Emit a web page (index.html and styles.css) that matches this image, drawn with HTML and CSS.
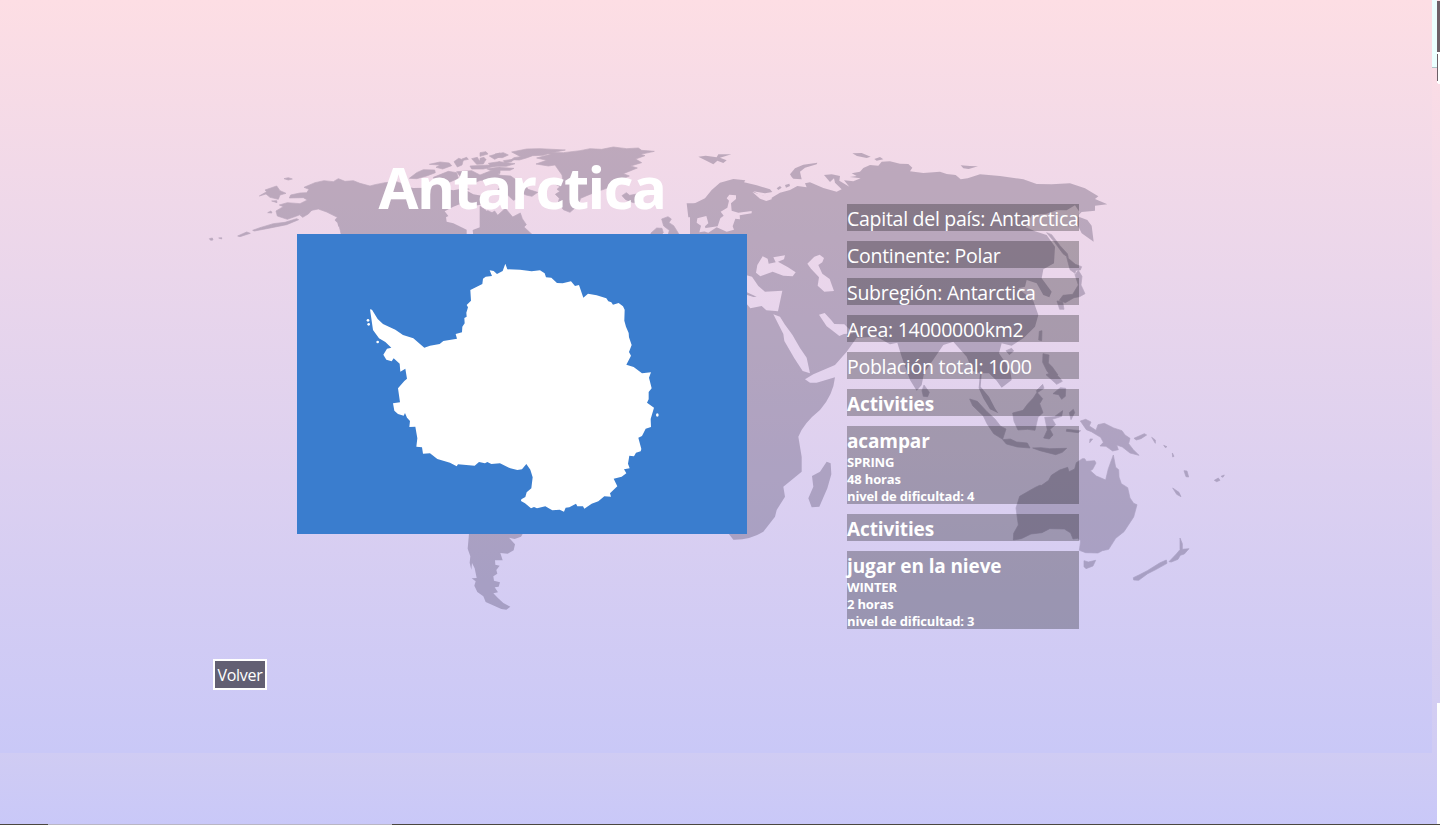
FILE: index.html
```html
<!DOCTYPE html>
<html lang="es">
<head>
<meta charset="utf-8">
<title>Antarctica</title>
<link rel="stylesheet" href="styles.css">
</head>
<body>
<div class="page">
  <div class="backdrop"></div>
  <svg class="map" viewBox="0 0 1440 825" aria-hidden="true">
    <defs>
      <filter id="soft"><feGaussianBlur stdDeviation="0.75"/></filter>
      <mask id="world" maskUnits="userSpaceOnUse" x="0" y="0" width="1440" height="825">
        <g filter="url(#soft)">
          <!-- Alaska and Canada -->
          <g fill="#fff" stroke="#fff" stroke-width="2" stroke-linejoin="round" transform="translate(200 140) scale(.33333)">
            <path d="M228 213L250 200L238 195L262 188L300 191L322 180L310 173L268 174L272 165L300 159L320 158L327 148L312 142L345 128L372 122L400 125L415 116L435 124L460 122L480 130L510 138L525 134L555 128L590 125L630 140L680 145L720 130L760 150L800 145L840 160L870 190L860 210L900 230V290H425L418 260L405 255L405 240L412 232L380 216L355 207L330 212L290 228L262 238L232 228Z"/>
            <path d="M178 168L200 155L195 150L230 138L240 152L258 160L240 165L235 178L210 172L198 162ZM252 116L265 113L277 117L265 120ZM215 183L230 182L231 188ZM203 218L213 213L216 219ZM113 288L140 276L151 280L120 290ZM158 271L180 263L220 251L255 247L290 236L296 239L260 254L200 266L163 273ZM300 225L323 212L336 210L325 222L308 232ZM28 296L37 294L39 300L32 301ZM56 294L65 293L65 297Z"/>
            <path d="M628 115L650 98L670 89L704 90L706 98L680 108L650 116ZM688 73L720 66L748 69L755 77L728 87L708 82L720 75ZM762 65L776 55L790 60L786 75L772 81ZM786 57L800 52L805 58L790 61ZM815 56L832 52L838 62L858 58L850 72L830 73ZM868 48L900 39V50L884 58ZM700 112L745 94L770 98L775 115L745 128L705 125ZM770 95L815 92L840 105L900 82V100L855 115L820 130L790 122ZM810 78L870 75L900 65V75L850 87L815 87Z"/>
            <path fill="#000" stroke="none" d="M734 214L760 200L790 188L820 198L868 190L870 205L855 217L858 240L840 262L818 270L820 288L800 288L800 269L760 250L740 245L738 232L745 228Z"/>
            <path fill="#000" stroke="none" d="M397 234L412 248L421 283L416 285L403 258L400 245ZM620 140L660 126L690 131L670 143L640 144ZM725 145L770 130L795 143L760 151ZM798 151L845 138L865 155L850 168L820 163Z"/>
          </g>
          <!-- Arctic islands, Greenland, Labrador, Iceland, Britain -->
          <g fill="#fff" stroke="#fff" stroke-width="2" stroke-linejoin="round" transform="translate(480 140) scale(.33333)">
            <path d="M168 72L200 61L170 54L212 43L192 37L250 38L300 32L330 26L365 28L400 21L440 26L475 24L485 31L523 34L482 43L495 47L467 57L485 68L452 78L472 84L430 101L448 108L433 114L408 122L415 130L380 145L350 155L320 167L302 175L294 196L270 217L250 209L235 187L238 175L226 163L240 154L231 148L240 140L222 130L249 123L246 105L225 75L205 78Z"/>
            <path d="M45 42L70 38L85 45L67 53L45 52ZM95 36L140 27L180 26L256 30L212 39L190 46L158 47L139 54L118 60L94 59L102 53L122 50ZM70 62L104 57L94 65L75 68ZM25 70L58 65L105 71L79 79L34 79ZM20 86L55 82L102 85L90 91L30 91ZM0 38L18 35L24 42L0 49ZM0 55L12 52L18 59L0 66Z"/>
            <path d="M0 120L20 98L44 98L62 106L92 108L113 123L136 135L144 148L173 157L156 169L138 165L124 158L105 161L119 174L100 181L84 166L60 158L54 147L72 140L38 126ZM0 290V199L18 211L25 225L44 213L53 226L76 205L98 231L121 219L127 236L139 254L132 261L157 284V290Z"/>
            <path d="M426 167L439 158L449 166L476 161L492 172L478 184L460 188L437 179ZM513 279L530 264L546 265L550 278L538 290H512ZM545 237L564 230L574 237L567 248L581 257L596 281L600 290H563L568 271L551 258Z"/>
          </g>
          <!-- Europe, Asia and Africa -->
          <g fill="#fff" transform="translate(690 140) scale(.33333)">
            <path d="M0 205L10 192L45 175L65 150L90 128L130 117L166 121L162 127L200 136L240 148L247 156L225 160L190 154L210 165L245 173L270 158L300 150L322 138L350 142L345 130L360 127L400 144L440 155L455 148L435 128L432 115L420 126L402 105L425 103L450 108L448 122L478 140L462 121L490 124L512 115L480 111L500 108L485 100L510 95L520 84L540 75L565 77L575 65L600 64L630 71L655 72L667 83L660 94L700 99L750 95L770 102L797 105L812 118L833 115L870 103L930 108L1000 118L1040 132L1085 133L1140 130L1185 145L1225 169L1215 177L1252 193L1215 197L1215 212L1175 216L1162 229L1192 240L1205 257L1211 305L1175 280L1160 250L1168 215L1155 196L1130 211L1100 211L1070 221L1025 226L1008 262L1035 274L1070 285L1095 320L1092 370L1060 388L1055 415L1085 455L1078 472L1060 465L1040 430L1010 420L1005 440L985 445L1030 483L1045 525L1035 560L1000 595L965 617L935 610L927 640L960 688L965 720L935 743L920 722L897 700L875 700L872 740L897 770L915 805L925 820L900 808L880 775L866 744L870 700L848 693L830 650L790 605L760 615L702 700L695 735L680 752L660 720L635 650L622 608L600 613L560 590L500 593L470 635L435 675L370 703L345 718L360 728L380 728L435 712Q430 765 390 810Q340 850 325 890L335 950L335 995L280 1040L285 1070L260 1110L255 1130L220 1175Q180 1200 130 1199L115 1180L60 900L-150 750L-180 600L0 540Z"/>
            <path d="M-10 190L18 190L42 204L30 230L-5 232ZM0 290L20 250L35 255L55 282L100 274L143 285L170 340L0 350ZM410 965L422 970L424 1003L412 1045L388 1100L365 1102L355 1075L370 1040L366 1008L390 995Z"/>
            <path d="M25 50L47 47L80 52L85 43L124 43L90 53L110 61L100 69L82 62L70 73ZM305 111L300 103L315 85L340 74L382 68L380 73L345 83L330 95L335 118L310 116ZM487 40L515 39L542 50L530 54L501 48ZM553 57L570 51L580 58L560 62ZM260 145L270 138L275 143L265 150ZM285 135L298 131L300 138L288 143ZM812 76L840 78L864 79L836 87L820 85Z"/>
          </g>
          <g fill="#000" transform="translate(690 140) scale(.33333)">
            <path d="M92 215L112 203L117 182L110 175L118 164L138 166L138 177L123 190L125 212L145 218L185 213L185 220L149 226L150 238L136 236L128 259L132 269L110 275L80 262L55 278L39 273L47 264L83 259L91 235L101 227ZM22 235L49 228L55 250L45 259L48 274L28 277L33 257L20 248ZM187 156L215 165L245 171L245 178L229 183L210 176Z"/>
            <path d="M198 398L202 375L218 349L233 356L236 371L257 367L250 352L285 346L282 358L264 365L294 382L317 397L308 409L280 407L248 395L211 409ZM352 371L373 350L389 344L402 354L397 367L385 375L397 401L419 417L432 453L403 455L383 437L387 412L363 386ZM170 406L186 410L205 438L225 455L277 452L264 514L229 511L215 498L181 505L165 486V463L190 471L200 470L169 456ZM250 523L270 530L284 553L307 584L330 624L350 653L360 700L338 693L313 655L283 603L280 582ZM387 524L404 519L424 541L433 552L463 553L490 580L462 582L448 588L426 571L410 559Z"/>
          </g>
          <!-- Japan and Southeast Asia -->
          <g fill="#fff" stroke="#fff" stroke-width="2" stroke-linejoin="round" transform="translate(900 140) scale(.33333)">
            <path d="M440 278L455 284L480 317L502 341L505 353L489 341L464 307ZM500 351L526 373L545 380L541 390L528 391L525 400L510 389ZM535 391L546 409L543 435L555 461L539 470L522 473L496 488L478 481L489 466L518 463L535 435L525 404ZM471 483L488 485L492 508L479 508ZM418 574L426 572L425 602L416 600ZM318 632L335 625L341 633L328 644ZM429 641L447 645L445 669L457 681L474 705L459 711L442 695L428 667Z"/>
          </g>
          <!-- Indonesia, Australia and New Zealand -->
          <g fill="#fff" stroke="#fff" stroke-width="2" stroke-linejoin="round" transform="translate(900 370) scale(.33333)">
            <path d="M72 45L88 67L83 80L70 79L66 62ZM209 87L232 94L261 125L285 147L302 169L318 177L308 208L281 191L261 161L250 138L218 107ZM308 209L331 207L350 216L382 219L390 234L352 231L319 222ZM338 129L369 121L383 102L400 84L411 67L428 86L419 101L429 128L414 142L405 181L383 178L354 180L342 154ZM432 55L412 68L409 62L428 43ZM438 14L459 5L479 23L487 34L470 43ZM459 71L481 53L497 55L496 79L485 88L476 74ZM434 142L463 140L488 122L485 139L457 148L467 164L450 178L459 195L448 207L431 204L442 180ZM508 128L520 118L524 128L513 149ZM500 178L542 182L535 188L499 184ZM398 234L423 233L449 236L500 235L487 247L467 254L420 242ZM541 153L557 148L573 156L568 168L588 181L594 164L613 160L641 174L666 182L675 195L690 205L686 221L700 239L717 256L690 249L667 231L650 225L655 239L638 243L618 229L600 228L610 217L602 202L574 185L559 179ZM570 207L578 207L569 218ZM702 205L733 191L740 195L723 206L709 210ZM755 202L766 210L766 220ZM791 226L801 230L796 233ZM817 249L822 259L818 261ZM852 302L861 303L866 321L858 320ZM943 331L955 324L960 331L950 335ZM963 319L973 315L969 322ZM818 354L837 367L843 380L830 373Z"/>
            <path d="M340 510L341 490L355 465L348 414L359 379L404 353L419 346L425 346L446 331L454 316L479 300L503 292L507 305L524 297L529 278L547 266L554 266L559 274L584 272L588 279L578 298L571 302L589 318L617 330L625 296L640 255L647 292L656 299L657 321L664 341L683 353L690 384L701 400L711 404L701 441L672 485L647 505L626 538L607 542L594 549L557 548L538 541L542 513L533 505L519 507L512 489L493 477L449 476L426 488L393 492L364 506ZM552 572L565 576L587 571L579 588L558 596L552 590ZM840 504L847 521L847 538L867 536L853 552L841 556L834 568L814 576L807 575L829 552L840 539ZM799 570L801 580L769 598L743 611L716 631L701 630L700 623L717 615L742 602L779 579Z"/>
          </g>
          <!-- Southern tip of South America -->
          <path fill="#fff" transform="translate(440 520) scale(.33333)" d="M88 30H255L243 50L224 57L207 53L225 73L221 91L203 101L181 99L188 121L165 121L166 134L179 137L169 150L172 161L160 169L162 182L180 187L176 200L164 202L174 217L160 220L173 233L190 249L211 260L199 269L184 267L137 246L130 229L112 216L103 197L107 184L95 175L110 174L104 145L96 129L94 149L89 128L91 109L83 86Z"/>
        </g>
      </mask>
    </defs>
    <rect width="1440" height="825" fill="#201838" fill-opacity=".25" mask="url(#world)"/>
  </svg>

  <main class="detail">
    <div class="columns">
      <section class="country">
        <h1 class="country-name">Antarctica</h1>
        <svg class="flag" viewBox="0 0 450 300" role="img" aria-label="Antarctica">
          <rect width="450" height="300" fill="#3a7dce"/>
          <g fill="#fff" transform="translate(-7 -4) scale(.33333)">
            <path d="M240 238L246 239L263 267L279 282L316 299L339 315L370 325L403 353L420 347L449 342L460 333L501 326L497 312L516 307L517 290L524 280L523 264L530 260L529 248L534 232L530 225L543 212L541 180L577 162L579 146L587 140L606 138L599 121L611 123L621 132L638 123L646 101L652 118L690 119L725 124L750 121L764 130L768 142L784 143L801 159L818 160L843 154L855 168L867 165L880 203L894 191L920 196L949 205L955 214L964 217L969 224L986 219L999 229L1004 239L1003 272L1008 290L1016 309L1017 322L1025 345L1017 366L1023 377L1009 404L1031 411L1056 430L1083 427L1077 443L1085 475L1076 486V508L1071 518L1092 533L1082 567L1083 591L1067 596L1056 618L1045 623L1054 657L1052 664L1038 668L1032 679L1018 677L1014 701L1019 715L1002 718L1009 730L995 740L971 746L982 769L960 790L963 800L943 799L925 814L905 821L883 836L879 829L862 829L858 821L838 832L827 833L822 845L809 839L787 841L766 829L741 835L732 831L723 835L705 820L693 813L694 808L706 801L710 787L724 775L728 742L721 719L709 702L696 718L682 720L661 715L630 700L604 702L592 696L585 700L567 696L554 707L504 703L500 709L480 698L442 687L420 670L399 671L396 652L379 650L382 625L376 590L358 591L360 573L351 563L345 549L341 557L324 552L313 542L309 520L330 517L324 475L343 453L351 446L346 416L331 425L329 401L311 385L305 394L289 389L280 374L291 356L304 353L286 336L267 325L249 300Z"/>
            <circle cx="263" cy="336" r="4"/><circle cx="234" cy="271" r="4"/><circle cx="236" cy="283" r="4"/><ellipse cx="1102" cy="555" rx="4" ry="5"/>
          </g>
        </svg>
      </section>
      <section class="facts">
        <p class="fact">Capital del país: Antarctica</p>
        <p class="fact">Continente: Polar</p>
        <p class="fact">Subregión: Antarctica</p>
        <p class="fact">Area: 14000000km2</p>
        <p class="fact">Población total: 1000</p>
        <h3 class="fact heading">Activities</h3>
        <div class="activity">
          <h3 class="heading">acampar</h3>
          <h5 class="line">SPRING</h5>
          <h5 class="line">48 horas</h5>
          <h5 class="line">nivel de dificultad: 4</h5>
        </div>
        <h3 class="fact heading">Activities</h3>
        <div class="activity">
          <h3 class="heading">jugar en la nieve</h3>
          <h5 class="line">WINTER</h5>
          <h5 class="line">2 horas</h5>
          <h5 class="line">nivel de dificultad: 3</h5>
        </div>
      </section>
    </div>
    <button class="back">Volver</button>
  </main>

  <svg class="edges" viewBox="0 0 1440 825" aria-hidden="true">
    <path fill="#ecffff" d="M1432 0h5v67h-5z"/>
    <path fill="#afc4c8" d="M1432 67h5v1h-5z"/>
    <path fill="#6d6068" d="M1437 1h3v51h-3zM1437 54h1v27h-1z"/>
    <path fill="#fff" d="M1438 52h2v32h-2zM1437 52h1v2h-1zM1437 81h1v2h-1zM1437 703h3v121h-3z"/>
    <path fill="#4b4740" d="M0 824h48v1H0zM392 824h1048v1H392z"/>
    <path fill="#b9b6c4" d="M48 824h344v1H48z"/>
  </svg>
</div>
</body>
</html>
```
FILE: styles.css
```css
* { box-sizing: border-box; }
body {
  margin: 0;
  overflow: hidden;
  font-family: "Open Sans", "Noto Sans", sans-serif;
  color: #fff;
}
.page {
  display: grid;
  width: 1440px;
  height: 825px;
  background: linear-gradient(#ffdee4, #d0ccf3 91%, #c9c8f8);
}
.page > * { grid-area: 1 / 1; }
.backdrop {
  width: 1432px;
  height: 753px;
  background: linear-gradient(#fddee4, #c9c8f7);
}
.map, .edges { display: block; width: 1440px; height: 825px; }
.edges { pointer-events: none; }
.detail { padding: 154px 213px 0; }
.columns {
  display: flex;
  align-items: flex-start;
  gap: 100px;
  padding-left: 84px;
}
.country { width: 450px; }
.country-name {
  margin: 0;
  height: 80px;
  font-size: 58px;
  line-height: 65px;
  letter-spacing: -1.5px;
  text-align: center;
}
.flag { display: block; width: 450px; height: 300px; }
.facts {
  display: flex;
  flex-direction: column;
  gap: 10px;
  width: 232px;
  padding-top: 50px;
}
.fact, .activity { margin: 0; background: rgba(0, 0, 0, .27); }
.fact {
  height: 27px;
  font-size: 19.5px;
  line-height: 29px;
  letter-spacing: -.27px;
  white-space: nowrap;
}
.activity { height: 78px; }
.heading {
  margin: 0;
  height: 27px;
  font-size: 19px;
  font-weight: 700;
  line-height: 31px;
  letter-spacing: -.12px;
}
.line {
  position: relative;
  top: 1px;
  margin: 0;
  font-size: 13px;
  font-weight: 700;
  line-height: 17px;
  letter-spacing: -.16px;
}
.back {
  display: block;
  width: 54px;
  height: 31px;
  margin-top: 30px;
  padding: 0;
  border: 2px solid #fff;
  background: #625f73;
  color: #fff;
  font: 16px "Open Sans", sans-serif;
  letter-spacing: -.3px;
}
```
